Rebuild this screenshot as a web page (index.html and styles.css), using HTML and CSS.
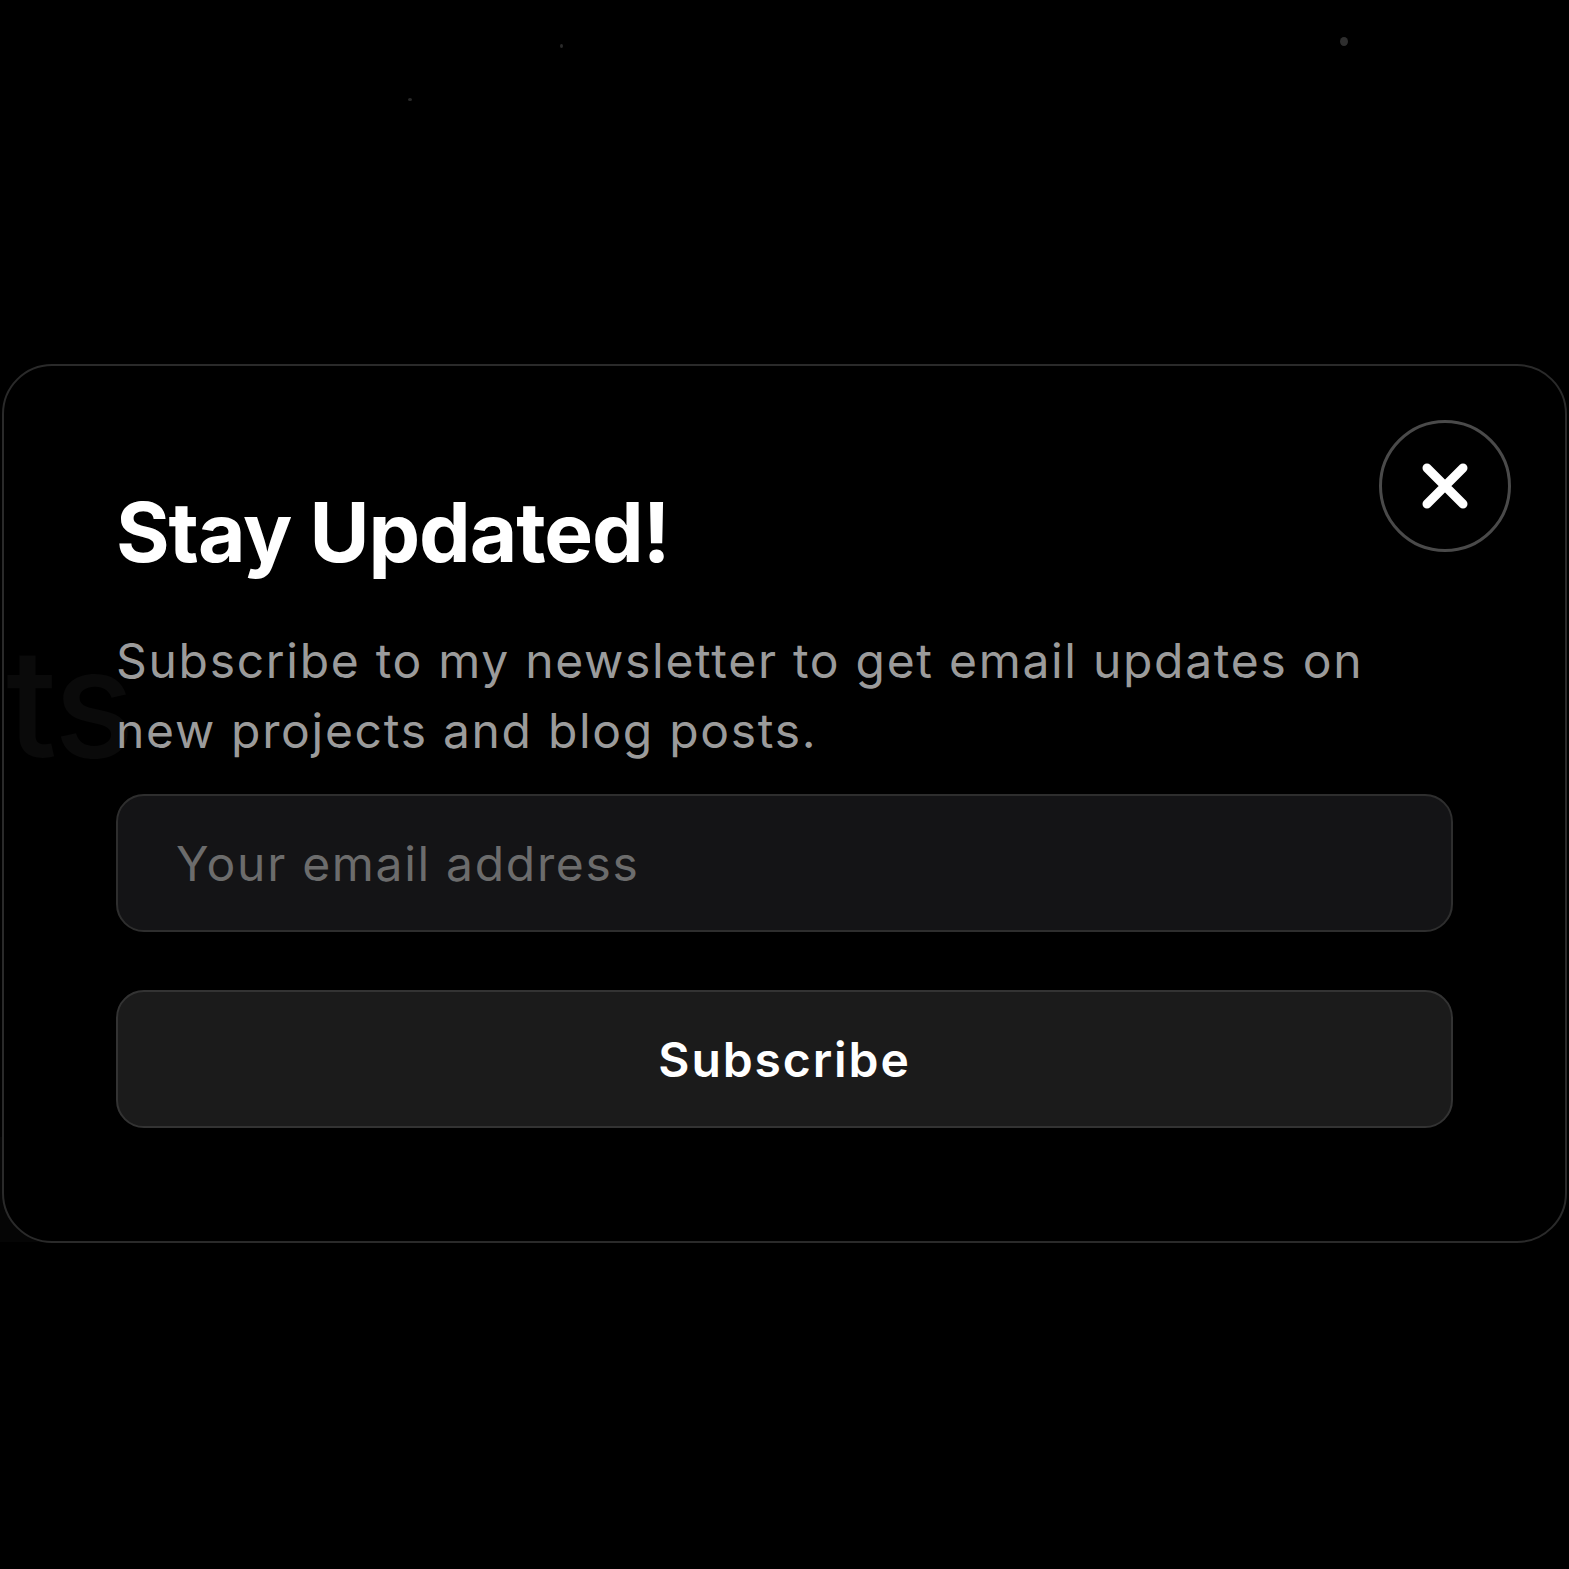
FILE: index.html
```html
<!DOCTYPE html>
<html lang="en">
<head>
<meta charset="utf-8">
<title>Stay Updated</title>
<link rel="stylesheet" href="styles.css">
</head>
<body>
<div class="page">
  <div class="backdrop" aria-hidden="true">
    <span class="dot dot-a"></span>
    <span class="dot dot-b"></span>
    <span class="dot dot-c"></span>
    <span class="ghost-title">ts</span>
    <div class="ghost-panel"></div>
  </div>
  <div class="modal">
    <button class="close" aria-label="Close">
      <svg viewBox="0 0 48 48" width="48" height="48"><path d="M6 6 L42 42 M42 6 L6 42" stroke="#fff" stroke-width="9" stroke-linecap="round" fill="none"/></svg>
    </button>
    <h1 class="title">Stay Updated!</h1>
    <p class="lead">Subscribe to my newsletter to get email updates on new projects and blog posts.</p>
    <form class="form">
      <input class="email" type="email" placeholder="Your email address">
      <button class="submit" type="button">Subscribe</button>
    </form>
  </div>
</div>
</body>
</html>
```

FILE: styles.css
```css
* { box-sizing: border-box; }
html, body { margin: 0; padding: 0; background: #000; }
body { font-family: Inter, "Noto Sans", sans-serif; color: #fff; }
.page {
  position: relative;
  width: 1569px;
  height: 1569px;
  padding-top: 364px;
  padding-left: 2px;
  overflow: hidden;
}
.backdrop { position: absolute; inset: 0; }
.dot { position: absolute; border-radius: 50%; background: #2a2a2a; }
.dot-a { left: 1340px; top: 37px; width: 8px; height: 9px; background: #2e2e2e; }
.dot-b { left: 560px; top: 44px; width: 3px; height: 4px; }
.dot-c { left: 408px; top: 98px; width: 4px; height: 3px; }
.ghost-title {
  position: absolute;
  left: 6px;
  top: 612px;
  font-size: 150px;
  font-weight: 500;
  color: #0a0a0a;
  letter-spacing: -2px;
  z-index: 2;
}
.ghost-panel {
  position: absolute;
  left: 0;
  top: 1137px;
  width: 480px;
  height: 105px;
  background: #050505;
}
.modal {
  position: relative;
  width: 1565px;
  height: 879px;
  border: 2px solid #2a2a2a;
  border-radius: 50px;
  background: rgba(0, 0, 0, 0.9);
  padding: 126px 112px 0 112px;
}
.close {
  position: absolute;
  top: 54px;
  right: 54px;
  width: 132px;
  height: 132px;
  border-radius: 50%;
  border: 3px solid #4a4a4a;
  background: #000;
  display: flex;
  align-items: center;
  justify-content: center;
  padding: 0;
}
.close svg { width: 48px; height: 48px; }
.title {
  margin: 0;
  font-size: 82px;
  line-height: 82px;
  font-weight: 700;
  letter-spacing: -1.1px;
}
.lead {
  position: relative;
  z-index: 3;
  margin: 52px 0 0;
  font-size: 48px;
  line-height: 70px;
  color: #9b9b9b;
  letter-spacing: 1.7px;
  max-width: 1335px;
}
.form {
  margin-top: 28px;
  display: flex;
  flex-direction: column;
  gap: 58px;
  width: 1337px;
}
.email {
  height: 138px;
  border: 2px solid #2e2e2e;
  border-radius: 28px;
  background: #141416;
  padding: 0 58px;
  font-family: Inter, "Noto Sans", sans-serif;
  font-size: 48px;
  letter-spacing: 1.7px;
  color: #fff;
  outline: none;
}
.email::placeholder { color: #6c6c6c; }
.submit {
  height: 138px;
  border: 2px solid #333;
  border-radius: 28px;
  background: #1b1b1b;
  color: #fff;
  font-family: Inter, "Noto Sans", sans-serif;
  font-size: 48px;
  font-weight: 600;
  letter-spacing: 1.9px;
}
```
